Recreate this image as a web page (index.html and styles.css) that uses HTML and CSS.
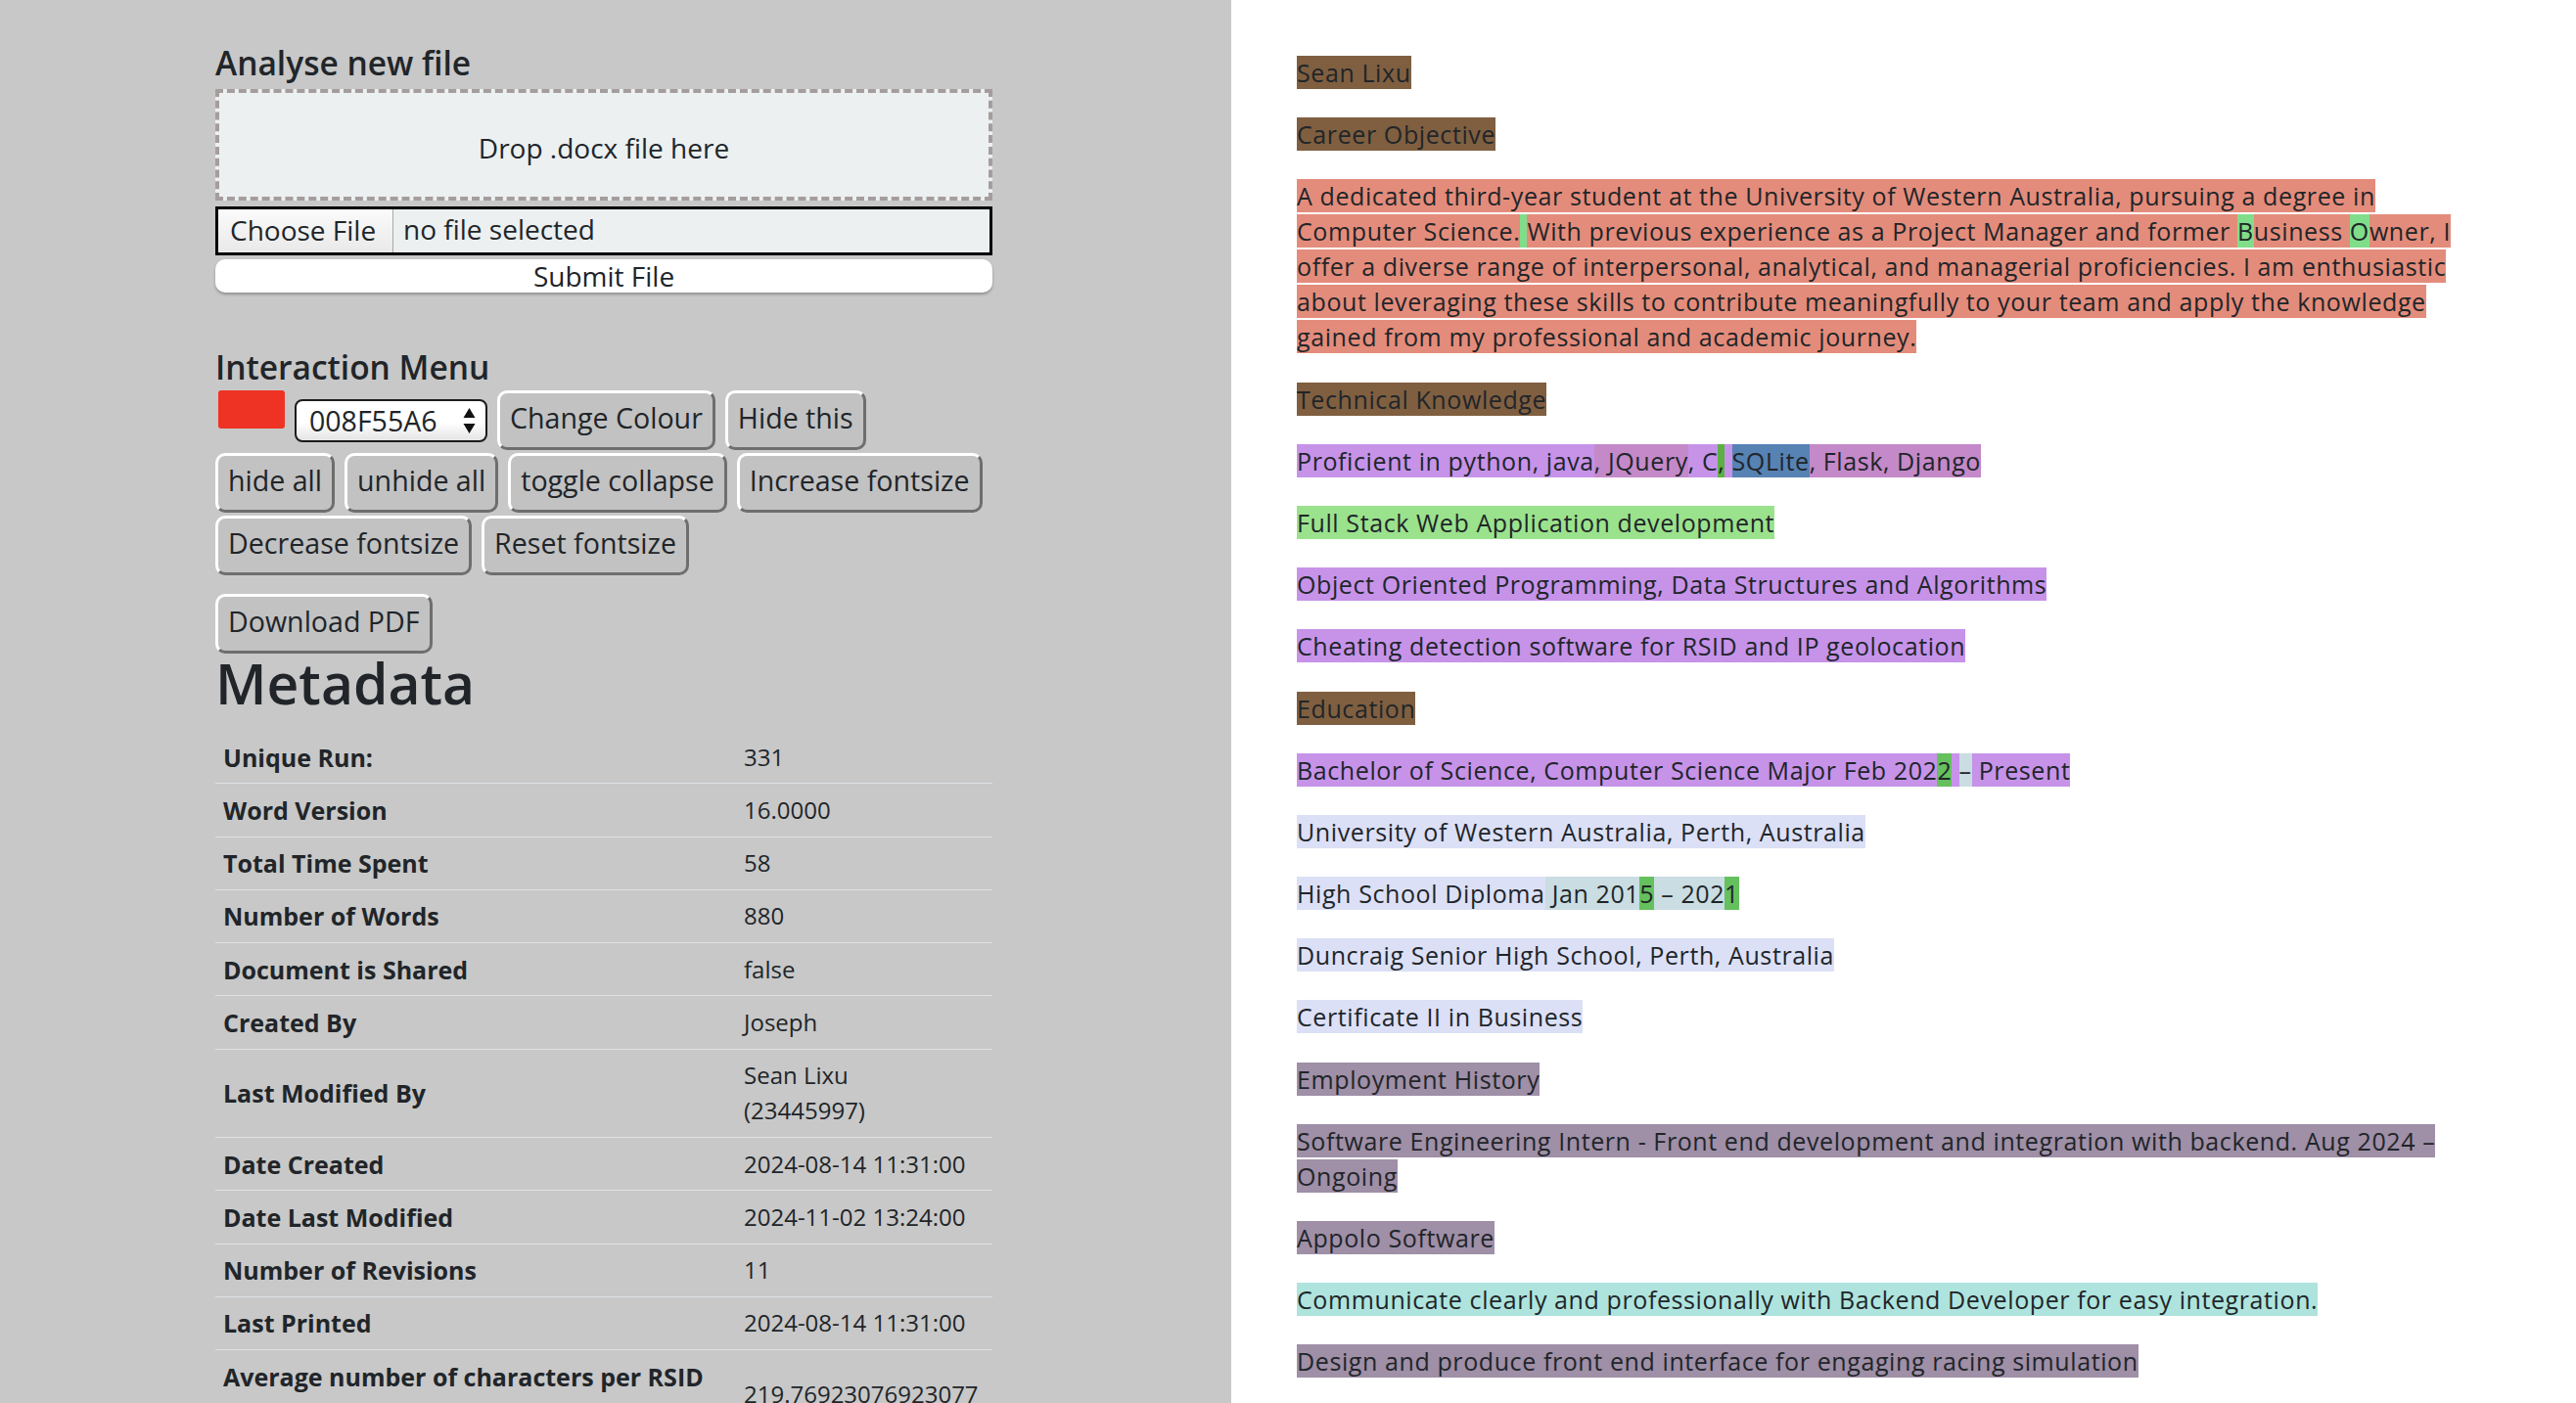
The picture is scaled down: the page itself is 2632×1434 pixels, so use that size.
FILE: index.html
```html
<!DOCTYPE html>
<html lang="en">
<head>
<meta charset="utf-8">
<title>Document Analyser</title>
<link rel="stylesheet" href="styles.css">
</head>
<body>
<div class="page">
  <aside class="side">
    <div class="side-inner">
      <h2 class="sec-title">Analyse new file</h2>
      <div class="dropzone">Drop .docx file here</div>
      <div class="file-input"><span class="file-btn">Choose File</span><span class="file-name">no file selected</span></div>
      <button class="submit">Submit File</button>

      <h2 class="sec-title menu-title">Interaction Menu</h2>
      <div class="controls row1">
        <span class="swatch"></span>
        <div class="select"><span>008F55A6</span>
          <svg class="arrows" width="13" height="28" viewBox="0 0 13 28"><path d="M0.5 11 L6.5 1 L12.5 11 Z M0.5 17 L12.5 17 L6.5 27 Z" fill="#111"/></svg>
        </div>
        <button class="btn">Change Colour</button>
        <button class="btn">Hide this</button>
      </div>
      <div class="controls">
        <button class="btn">hide all</button>
        <button class="btn">unhide all</button>
        <button class="btn">toggle collapse</button>
        <button class="btn">Increase fontsize</button>
        <button class="btn">Decrease fontsize</button>
        <button class="btn">Reset fontsize</button>
      </div>
      <div class="controls pdf">
        <button class="btn">Download PDF</button>
      </div>

      <h1 class="meta-title">Metadata</h1>
      <table class="meta">
        <colgroup><col class="c1"><col class="c2"></colgroup>
        <tbody>
          <tr><th>Unique Run:</th><td>331</td></tr>
          <tr><th>Word Version</th><td>16.0000</td></tr>
          <tr><th>Total Time Spent</th><td>58</td></tr>
          <tr><th>Number of Words</th><td>880</td></tr>
          <tr><th>Document is Shared</th><td>false</td></tr>
          <tr><th>Created By</th><td>Joseph</td></tr>
          <tr><th>Last Modified By</th><td class="wrap">Sean Lixu (23445997)</td></tr>
          <tr><th>Date Created</th><td class="nowrap">2024-08-14 11:31:00</td></tr>
          <tr><th>Date Last Modified</th><td class="nowrap">2024-11-02 13:24:00</td></tr>
          <tr><th>Number of Revisions</th><td>11</td></tr>
          <tr><th>Last Printed</th><td class="nowrap">2024-08-14 11:31:00</td></tr>
          <tr><th>Average number of characters per RSID (on average)</th><td class="nowrap">219.76923076923077</td></tr>
        </tbody>
      </table>
    </div>
  </aside>

  <main class="doc">
    <div class="doc-inner">
      <p><span class="brown">Sean Lixu</span></p>
      <p><span class="brown">Career Objective</span></p>
      <p><span class="salmon">A dedicated third-year student at the University of Western Australia, pursuing a degree in Computer Science.</span><span class="green"> </span><span class="salmon">With previous experience as a Project Manager and former </span><span class="green">B</span><span class="salmon">usiness </span><span class="green">O</span><span class="salmon">wner, I offer a diverse range of interpersonal, analytical, and managerial proficiencies. I am enthusiastic about leveraging these skills to contribute meaningfully to your team and apply the knowledge gained from my professional and academic journey.</span></p>
      <p><span class="brown">Technical Knowledge</span></p>
      <p><span class="purple">Proficient in python, java</span><span class="pink">, JQuery</span><span class="purple">, C</span><span class="green-dark">,</span><span class="purple"> </span><span class="blue">SQLite</span><span class="pink">, Flask, Django</span></p>
      <p><span class="lime">Full Stack Web Application development</span></p>
      <p><span class="purple">Object Oriented Programming, Data Structures and Algorithms</span></p>
      <p><span class="purple">Cheating detection software for RSID and IP geolocation</span></p>
      <p><span class="brown">Education</span></p>
      <p><span class="purple">Bachelor of Science, Computer Science Major Feb 202</span><span class="green-mid">2</span><span class="purple"> </span><span class="slate">–</span><span class="purple"> Present</span></p>
      <p><span class="lav">University of Western Australia, Perth, Australia</span></p>
      <p><span class="lav">High School Diploma</span><span class="slate"> Jan 201</span><span class="green-mid">5</span><span class="slate"> – 202</span><span class="green-mid">1</span></p>
      <p><span class="lav">Duncraig Senior High School, Perth, Australia</span></p>
      <p><span class="lav">Certificate II in Business</span></p>
      <p><span class="mauve">Employment History</span></p>
      <p><span class="mauve">Software Engineering Intern - Front end development and integration with backend. Aug 2024 – Ongoing</span></p>
      <p><span class="mauve">Appolo Software</span></p>
      <p><span class="teal">Communicate clearly and professionally with Backend Developer for easy integration.</span></p>
      <p><span class="mauve">Design and produce front end interface for engaging racing simulation</span></p>
    </div>
  </main>
</div>
</body>
</html>
```

FILE: styles.css
```css
* { box-sizing: border-box; }

html, body {
  margin: 0;
  padding: 0;
}

body {
  font-family: "Open Sans", "Liberation Sans", sans-serif;
  color: #212529;
  background: #ffffff;
}

.page {
  display: flex;
  min-height: 100vh;
}

/* ---------- left side ---------- */
.side {
  width: 1258px;
  flex: 0 0 1258px;
  background: #c8c8c8;
  padding-top: 44px;
}

.side-inner {
  width: 794px;
  margin-left: 220px;
  display: flex;
  flex-direction: column;
}

.sec-title {
  margin: 0;
  font-size: 33.5px;
  line-height: 40px;
  font-weight: 600;
  color: #212529;
}

.menu-title {
  margin-top: 56px;
}

.dropzone {
  margin-top: 7px;
  height: 114px;
  border: 4px dashed #a59d9d;
  background: #ecf0f1;
  display: flex;
  align-items: center;
  justify-content: center;
  font-size: 28px;
  padding-top: 5px;
}

.file-input {
  margin-top: 6px;
  height: 50px;
  border: 3px solid #000;
  background: #ecf0f1;
  display: flex;
  align-items: stretch;
  font-size: 28px;
}

.file-btn {
  width: 179px;
  background: linear-gradient(#fbfbfb, #e9e9e9);
  border-right: 1px solid #a8a8a8;
  display: flex;
  align-items: center;
  padding-left: 12px;
  padding-bottom: 2px;
}

.file-name {
  display: flex;
  align-items: center;
  padding-left: 10px;
  padding-bottom: 4px;
}

.submit {
  margin-top: 4px;
  height: 34px;
  border: none;
  border-radius: 10px;
  background: #ffffff;
  box-shadow: 0 2px 3px rgba(0, 0, 0, 0.28);
  font-family: inherit;
  font-size: 28px;
  line-height: 32px;
  color: #212529;
  padding: 0;
}

.controls {
  display: flex;
  flex-wrap: wrap;
  gap: 3px 10px;
  margin-top: 3px;
}

.controls.row1 {
  margin-top: 4px;
  align-items: flex-start;
}

.controls.pdf {
  margin-top: 19px;
}

.swatch {
  width: 68px;
  height: 39px;
  margin-left: 3px;
  background: #ee3324;
  border-radius: 3px;
}

.select {
  width: 197px;
  height: 44px;
  margin-top: 9px;
  border: 2px solid #1b1b1b;
  border-radius: 8px;
  background: linear-gradient(#ffffff 0%, #ffffff 55%, #e4e4e4 100%);
  display: flex;
  align-items: center;
  justify-content: space-between;
  padding: 0 10px 0 13px;
  font-size: 28.5px;
}

.arrows { display: block; }

.btn {
  height: 61px;
  font-family: inherit;
  font-size: 28.6px;
  line-height: 36px;
  color: #212529;
  background: #c2c2c2;
  border: 3px solid;
  border-color: #ffffff #6e6e6e #6e6e6e #ffffff;
  border-radius: 10px;
  padding: 7px 10px 12px;
  white-space: nowrap;
}

.meta-title {
  margin: 0;
  font-size: 57px;
  line-height: 60px;
  font-weight: 600;
  color: #212529;
}

.meta {
  margin-top: 19px;
  width: 794px;
  border-collapse: collapse;
  table-layout: fixed;
  font-size: 24px;
  line-height: 36px;
}

.meta .c1 { width: 532px; }
.meta .c2 { width: 262px; }

.meta th,
.meta td {
  padding: 8.65px 8px;
  border-bottom: 1px solid #dee2e6;
  vertical-align: middle;
  text-align: left;
}

.meta th {
  font-weight: 700;
  font-size: 25px;
}
.meta td { font-weight: 400; }
.meta td.nowrap { white-space: nowrap; }
.meta td.wrap { padding-right: 40px; }

/* ---------- right side (document) ---------- */
.doc {
  flex: 1;
  background: #ffffff;
  padding: 56px 0 0 67px;
}

.doc-inner {
  width: 1205px;
  font-size: 25px;
  letter-spacing: 0.6px;
  line-height: 36px;
}

.doc-inner p {
  margin: 0 0 27.2px;
}

.brown { background: #7f5f40; }
.salmon { background: #e48c7b; }
.green { background: #80de8a; }
.green-dark { background: #5cb043; }
.green-mid { background: #65c05e; }
.purple { background: #c693e9; }
.pink { background: #c489c9; }
.blue { background: #5682b4; }
.lime { background: #9be28d; }
.slate { background: #c9dde2; }
.lav { background: #dce0f6; }
.mauve { background: #9f8fa7; }
.teal { background: #aee4dd; }
```
